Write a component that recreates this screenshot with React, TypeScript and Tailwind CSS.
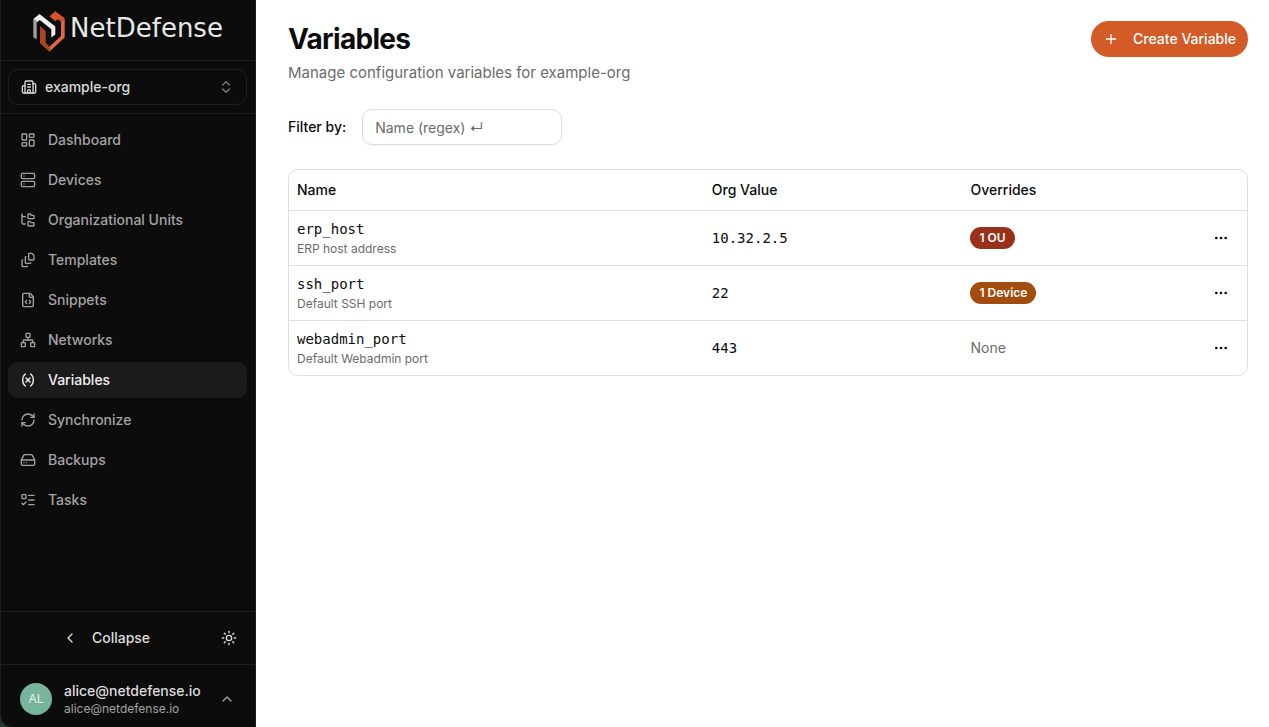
import {
  Building2,
  ChevronLeft,
  ChevronsUpDown,
  ChevronUp,
  Ellipsis,
  FileCode,
  FileStack,
  FolderTree,
  HardDrive,
  LayoutDashboard,
  ListTodo,
  Network,
  Plus,
  RefreshCw,
  Server,
  Sun,
  Variable,
} from 'lucide-react';

const navItems = [
  { label: 'Dashboard', icon: LayoutDashboard },
  { label: 'Devices', icon: Server },
  { label: 'Organizational Units', icon: FolderTree },
  { label: 'Templates', icon: FileStack },
  { label: 'Snippets', icon: FileCode },
  { label: 'Networks', icon: Network },
  { label: 'Variables', icon: Variable, active: true },
  { label: 'Synchronize', icon: RefreshCw },
  { label: 'Backups', icon: HardDrive },
  { label: 'Tasks', icon: ListTodo },
];

const variables = [
  { name: 'erp_host', description: 'ERP host address', value: '10.32.2.5', override: '1 OU', badge: 'bg-[#9a3019]' },
  { name: 'ssh_port', description: 'Default SSH port', value: '22', override: '1 Device', badge: 'bg-[#a34c0e]' },
  { name: 'webadmin_port', description: 'Default Webadmin port', value: '443', override: null, badge: '' },
];

function Logo() {
  return (
    <a href="#" className="flex h-15 items-start justify-center gap-[5px] pt-2 text-[#e8e8e8]">
      <svg width="32" height="46" viewBox="0 0 32 46" aria-hidden="true">
        <path d="M0.300 11 3.700 13V31.500L0.300 29Z" fill="#a0a0a0" />
        <path d="M0.300 11 6.500 6 22.300 18.500V26.500L18.300 29.500V21.300L6.800 12 3.700 14.500V13Z" fill="#f0f0f0" />
        <path d="M16.500 8.300 22.300 3.300 31.700 10.300 28 13.700 24.800 11.300 22.300 13.300Z" fill="#d4552a" />
        <path d="M28 13.700 31.700 10.300V29.500L16.300 43.700V38.700L28 28Z" fill="#dc6844" />
        <path d="M7 18 12.700 23V34.700L16.500 38.500 16.300 43.700 7 35.300Z" fill="#a94524" />
      </svg>
      <span className="font-['DejaVu_Sans',sans-serif] text-[26px] leading-10">NetDefense</span>
    </a>
  );
}

function Sidebar() {
  return (
    <div className="flex w-64 shrink-0 bg-[#24382d]">
      <aside className="flex flex-1 flex-col rounded-bl-xl border-x border-[#1f1f1f] bg-[#0c0c0c]">
        <Logo />

        <div className="border-y border-[#1f1f1f] py-2 pr-2 pl-[7px]">
          <button
            type="button"
            className="flex h-9 w-full items-center gap-2 rounded-[10px] border border-[#1f1f1f] px-3 text-sm font-medium text-[#dcdcdc]"
          >
            <Building2 size={16} />
            example-org
            <ChevronsUpDown size={16} className="ml-auto text-[#7a7a7a]" />
          </button>
        </div>

        <nav className="flex flex-1 flex-col gap-1 py-2 pr-2 pl-[7px]">
          {navItems.map(({ label, icon: Icon, active }) => (
            <a
              key={label}
              href="#"
              aria-current={active ? 'page' : undefined}
              className={`flex h-9 items-center gap-3 rounded-[10px] px-3 text-sm font-medium ${
                active ? 'bg-[#1b1b1b] text-[#f0f0f0]' : 'text-[#a3a3a3]'
              }`}
            >
              <Icon size={16} />
              {label}
            </a>
          ))}
        </nav>

        <div className="flex h-[53px] items-center border-t border-[#1f1f1f] px-2 text-[#dcdcdc]">
          <button
            type="button"
            className="flex h-9 flex-1 items-center justify-center gap-3.5 pr-2 text-sm font-medium"
          >
            <ChevronLeft size={16} />
            Collapse
          </button>
          <button type="button" aria-label="Toggle theme" className="flex size-9 items-center justify-center">
            <Sun size={16} />
          </button>
        </div>

        <button
          type="button"
          className="flex items-center gap-3 border-t border-[#1f1f1f] pt-4 pr-5 pb-2.5 pl-[19px] text-left"
        >
          <span className="flex size-8 items-center justify-center rounded-full bg-[#76b49b] text-xs text-[#e8f3ee]">
            AL
          </span>
          <span className="flex-1">
            <span className="block text-sm leading-5 font-medium text-[#dcdcdc]">alice@netdefense.io</span>
            <span className="block text-xs leading-4 text-[#a3a3a3]">alice@netdefense.io</span>
          </span>
          <ChevronUp size={16} className="text-[#a3a3a3]" />
        </button>
      </aside>
    </div>
  );
}

function VariablesTable() {
  return (
    <div className="overflow-hidden rounded-[10px] border border-[#dedede]">
      <table className="w-full table-fixed text-left text-sm">
        <colgroup>
          <col className="w-[43.3%]" />
          <col className="w-[27%]" />
          <col />
          <col className="w-[52px]" />
        </colgroup>
        <thead>
          <tr className="h-10">
            <th className="px-2 font-medium">Name</th>
            <th className="px-2 font-medium">Org Value</th>
            <th className="px-2 font-medium">Overrides</th>
            <th aria-label="Actions" />
          </tr>
        </thead>
        <tbody>
          {variables.map((v) => (
            <tr key={v.name} className="h-[55px] border-t border-[#dedede]">
              <td className="px-2 pt-0.5">
                <div className="font-['DejaVu_Sans_Mono',monospace] leading-5">{v.name}</div>
                <div className="text-xs leading-5 text-[#6b6b6b]">{v.description}</div>
              </td>
              <td className="px-2 font-['DejaVu_Sans_Mono',monospace]">{v.value}</td>
              <td className="px-2">
                {v.override ? (
                  <span
                    className={`inline-flex h-[22px] items-center rounded-full px-[9px] text-xs font-semibold text-white ${v.badge}`}
                  >
                    {v.override}
                  </span>
                ) : (
                  <span className="text-[#6b6b6b]">None</span>
                )}
              </td>
              <td>
                <button
                  type="button"
                  aria-label={`Actions for ${v.name}`}
                  className="flex size-8 items-center justify-center pl-5"
                >
                  <Ellipsis size={16} className="shrink-0" />
                </button>
              </td>
            </tr>
          ))}
        </tbody>
      </table>
    </div>
  );
}

export default function App() {
  return (
    <div className="flex min-h-screen bg-white font-['Inter',sans-serif] text-[#0c0c0c]">
      <Sidebar />

      <main className="min-w-0 flex-1 pt-[21px] pr-[21px] pb-8 pl-8">
        <div className="flex items-start justify-between">
          <div>
            <h1 className="text-[28px] leading-9 font-bold tracking-tight">Variables</h1>
            <p className="mt-1 text-[15px] leading-6 text-[#6b6b6b]">Manage configuration variables for example-org</p>
          </div>
          <button
            type="button"
            className="flex h-9 items-center gap-3.5 rounded-full bg-[#d25b27] px-3 text-sm font-medium text-white"
          >
            <Plus size={16} />
            Create Variable
          </button>
        </div>

        {/* Filter */}
        <div className="mt-6 mb-6 flex items-center gap-4">
          <label htmlFor="name-filter" className="text-sm font-medium">
            Filter by:
          </label>
          <input
            id="name-filter"
            type="text"
            placeholder="Name (regex) ↵"
            className="h-9 w-50 rounded-[10px] border border-[#dedede] px-3 text-sm shadow-xs placeholder:text-[#6b6b6b]"
          />
        </div>

        <VariablesTable />
      </main>
    </div>
  );
}
